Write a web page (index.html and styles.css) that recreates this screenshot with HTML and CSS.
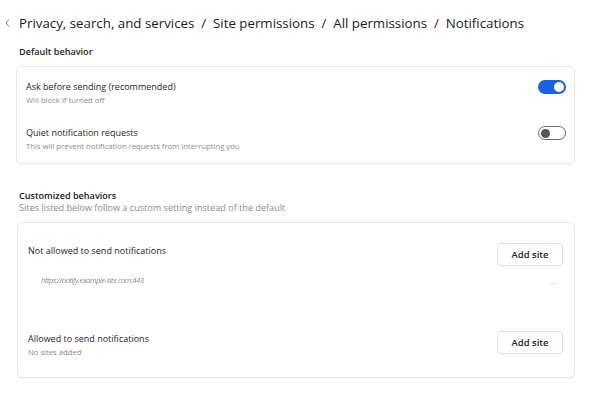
FILE: index.html
```html
<!DOCTYPE html>
<html>
<head>
<meta charset="utf-8">
<link rel="stylesheet" href="styles.css">
</head>
<body>
<div class="page">
  <div class="crumbs">
    <svg class="back" width="8" height="10" viewBox="0 0 8 10"><path d="M5 1.5 L2 5 L5 8.5" fill="none" stroke="#7a7a7a" stroke-width="1"/></svg>
    <h1 class="title">Privacy, search, and services&nbsp; /&nbsp; Site permissions&nbsp; /&nbsp; All permissions&nbsp; /&nbsp; Notifications</h1>
  </div>

  <div class="section-head">Default behavior</div>
  <div class="card card-default">
    <div class="row">
      <div class="texts">
        <div class="label">Ask before sending (recommended)</div>
        <div class="desc">Will block if turned off</div>
      </div>
      <div class="toggle on"><span class="knob"></span></div>
    </div>
    <div class="row">
      <div class="texts">
        <div class="label">Quiet notification requests</div>
        <div class="desc">This will prevent notification requests from interrupting you</div>
      </div>
      <div class="toggle off"><span class="knob"></span></div>
    </div>
  </div>

  <div class="section-head head2">Customized behaviors</div>
  <div class="section-sub">Sites listed below follow a custom setting instead of the default</div>
  <div class="card card-custom">
    <div class="crow">
      <div class="label">Not allowed to send notifications</div>
      <button class="btn">Add site</button>
    </div>
    <div class="site-row">
      <span class="site">https://notify.example-site.com:443</span>
      <span class="more">···</span>
    </div>
    <div class="crow crow2">
      <div class="texts">
        <div class="label">Allowed to send notifications</div>
        <div class="desc">No sites added</div>
      </div>
      <button class="btn">Add site</button>
    </div>
  </div>
</div>
</body>
</html>
```

FILE: styles.css
```css
* { box-sizing: border-box; }
html, body { margin: 0; background: #ffffff; }
body {
  font-family: "Open Sans", "Noto Sans", sans-serif;
  color: #1a1a1a;
  width: 605px;
  height: 393px;
  overflow: hidden;
}
.page {
  padding: 12px 30px 0 16px;
}
.crumbs {
  display: flex;
  align-items: center;
  height: 21px;
  margin-left: -12px;
}
.back { margin-right: 7px; flex: none; }
.title {
  margin: 0;
  font-size: 13.3px;
  font-weight: 500;
  color: #1b1b1b;
  white-space: nowrap;
}
.section-head {
  font-size: 9.1px;
  font-weight: 600;
  color: #222;
  margin: 12px 0 0 3px;
  line-height: 14px;
}
.head2 { margin-top: 25px; }
.section-sub {
  font-size: 9.1px;
  color: #8a8a8a;
  margin-left: 3px;
  margin-top: -2px;
  line-height: 14px;
}
.card {
  background: #fff;
  border: 1px solid #e8e8e8;
  border-radius: 5px;
  box-shadow: 0 1px 2px rgba(0,0,0,0.04);
}
.card-default {
  margin-top: 7px;
  padding: 6px 8px 8px 9px;
  height: 98px;
}
.row {
  display: flex;
  justify-content: space-between;
  align-items: center;
  height: 40px;
}
.row + .row { margin-top: 6px; }
.texts { display: flex; flex-direction: column; }
.label {
  font-size: 9px;
  color: #1e1e1e;
  line-height: 14px;
}
.desc {
  font-size: 7.7px;
  color: #8c8c8c;
  line-height: 13px;
}
.toggle {
  width: 28px;
  height: 14px;
  border-radius: 7px;
  display: flex;
  align-items: center;
  padding: 0 2px;
  margin-top: -12px;
}
.toggle .knob {
  width: 9px;
  height: 9px;
  border-radius: 50%;
}
.toggle.on { background: #1a62e0; justify-content: flex-end; }
.toggle.on .knob { background: #fff; width: 10px; height: 10px; }
.toggle.off { border: 1px solid #6d6d6d; background: #fff; padding: 0 2px; }
.toggle.off .knob { background: #555; }
.card-custom {
  margin-top: 7px;
  margin-left: 1px;
  height: 156px;
  padding: 20px 11px 0 10px;
}
.crow {
  display: flex;
  justify-content: space-between;
  align-items: center;
  height: 22px;
}
.crow .label { margin-top: -7px; }
.btn {
  font-family: inherit;
  width: 66px;
  height: 23px;
  font-size: 9.5px;
  font-weight: 600;
  color: #1e1e1e;
  background: #fff;
  border: 1px solid #e0e0e0;
  border-radius: 4px;
  padding: 0;
}
.site-row {
  display: flex;
  justify-content: space-between;
  align-items: center;
  margin-top: 5px;
  height: 20px;
  padding-left: 13px;
}
.site {
  font-size: 7.5px;
  font-style: italic;
  color: #8a8a8a;
  letter-spacing: -0.4px;
  filter: blur(0.5px);
}
.more {
  font-size: 8px;
  color: #9a9a9a;
  margin-right: 6px;
  margin-top: 4px;
}
.crow2 { margin-top: 41px; height: 23px; }
.crow2 .texts { margin-top: 6px; }
.crow2 .label { margin-top: 0; }
```
